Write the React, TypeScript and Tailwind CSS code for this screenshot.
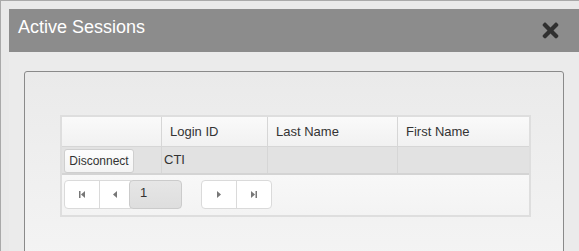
import { FaTimes } from 'react-icons/fa';

const columns = ['', 'Login ID', 'Last Name', 'First Name'];

const PagerIcon = ({ kind }: { kind: 'first' | 'prev' | 'next' | 'last' }) => (
    <svg width="8" height="9" viewBox="0 0 8 9" className="text-[#777]">
        {kind === 'first' && <><rect x="1" y="1" width="1.5" height="7" fill="currentColor" /><path d="M7 1 L3 4.5 L7 8 Z" fill="currentColor" /></>}
        {kind === 'prev' && <path d="M6 1 L2 4.5 L6 8 Z" fill="currentColor" />}
        {kind === 'next' && <path d="M2 1 L6 4.5 L2 8 Z" fill="currentColor" />}
        {kind === 'last' && <><path d="M1 1 L5 4.5 L1 8 Z" fill="currentColor" /><rect x="5.5" y="1" width="1.5" height="7" fill="currentColor" /></>}
    </svg>
);

const App: React.FC = () => {
    return (
        <div className="w-[579px] h-[251px] overflow-hidden bg-[#e9e9e9] border-t border-l border-[#a9a9a9] pl-2 pt-2 font-['Liberation_Sans',Arial,sans-serif]">
            <div className="h-full flex flex-col bg-[#ebebeb]">
                <div className="h-[43px] shrink-0 bg-[#8c8c8c] flex items-center justify-between pl-[9px] pr-[17px]">
                    <h1 className="text-white text-[18px] leading-none -mt-[8px]">Active Sessions</h1>
                    <FaTimes className="text-[#303030] -mt-[1px]" size={23} />
                </div>
                <div className="flex-1 pl-[15px] pr-[15px] pt-[19px]">
                    <div className="h-[190px] border border-[#8a8a8a] rounded-[3px] bg-gradient-to-b from-[#eaeaea] to-[#f4f4f4] pl-[35px] pt-[43px]">
                        <div className="w-[471px] border-2 border-[#dedede] bg-[#f5f5f5] text-[13px] text-[#333]">
                            <div className="grid grid-cols-[100px_106px_130px_1fr] h-[30px] bg-gradient-to-b from-[#fafafa] to-[#f1f1f1] border-b border-[#d6d6d6]">
                                {columns.map((col, index) => (
                                    <div key={index} className={`flex items-center pl-[8px] ${index < 3 ? 'border-r border-[#d6d6d6]' : ''}`}>{col}</div>
                                ))}
                            </div>
                            <div className="grid grid-cols-[100px_106px_130px_1fr] h-[28px] bg-[#e2e2e2] border-b-2 border-[#d4d4d4]">
                                <div className="border-r border-[#d6d6d6] pl-[2px] pt-[2px]">
                                    <button className="h-[24px] w-[70px] rounded-[3px] border border-[#cfcfcf] bg-gradient-to-b from-[#fdfdfd] to-[#f4f4f4] text-[12px] text-[#333] leading-none">Disconnect</button>
                                </div>
                                <div className="border-r border-[#d6d6d6] pl-[2px] pt-[6px] leading-none">CTI</div>
                                <div className="border-r border-[#d6d6d6]"></div>
                                <div></div>
                            </div>
                            <div className="h-[40px] flex items-center pl-[2px] pb-[1px] gap-[19px] bg-gradient-to-b from-[#f8f8f8] to-[#f3f3f3]">
                                <div className="flex items-center">
                                    <div className="flex h-[29px] border border-[#dadada] rounded-[4px] bg-white">
                                        <div className="w-[35px] flex items-center justify-center border-r border-[#dadada]"><PagerIcon kind="first" /></div>
                                        <div className="w-[33px] flex items-center justify-center pr-[3px]"><PagerIcon kind="prev" /></div>
                                    </div>
                                    <div className="-ml-[5px] w-[53px] h-[29px] rounded-[4px] border border-[#cbcbcb] bg-gradient-to-b from-[#e6e6e6] to-[#dedede] pl-[10px] pt-[5px] text-[13px] leading-none">1</div>
                                </div>
                                <div className="flex h-[29px] border border-[#dadada] rounded-[4px] bg-white">
                                    <div className="w-[35px] flex items-center justify-center border-r border-[#dadada]"><PagerIcon kind="next" /></div>
                                    <div className="w-[34px] flex items-center justify-center"><PagerIcon kind="last" /></div>
                                </div>
                            </div>
                        </div>
                    </div>
                </div>
            </div>
        </div>
    );
};

export default App;
